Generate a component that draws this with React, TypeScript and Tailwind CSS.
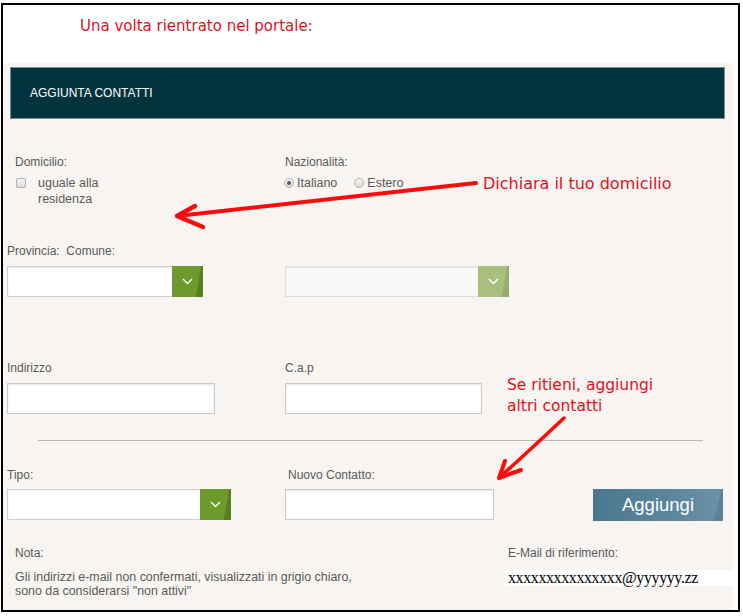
import React from "react";

const label = "text-[12px] leading-[14px] text-[#5a5a5a]";

function Chevron() {
  return (
    <svg width="11" height="7" viewBox="0 0 11 7" fill="none" className="relative">
      <path d="M1 1l4.5 4.5L10 1" stroke="white" strokeWidth="1.3" />
    </svg>
  );
}

function SelectBox({ className, disabled = false }: { className: string; disabled?: boolean }) {
  return (
    <div className={`flex h-[31px] ${className}`}>
      <div
        className={`flex-1 border-y border-l shadow-[inset_0_1px_2px_rgba(0,0,0,0.08)] ${
          disabled ? "border-[#dedede] bg-[#faf9f8]" : "border-[#cfcfcf] bg-white"
        }`}
      />
      <div
        className={`relative flex w-[31px] items-center justify-center ${
          disabled ? "bg-[#a9c07d]" : "bg-[#6c9a2d]"
        }`}
      >
        <div
          className={`absolute inset-0 [clip-path:polygon(94%_0,100%_0,100%_100%,77%_100%)] ${
            disabled ? "bg-[#97ad6c]" : "bg-[#587f22]"
          }`}
        />
        <Chevron />
      </div>
    </div>
  );
}

function TextInput({ className }: { className: string }) {
  return (
    <input
      readOnly
      className={`block h-[31px] border border-[#cacaca] bg-white shadow-[inset_0_1px_2px_rgba(0,0,0,0.1)] outline-none ${className}`}
    />
  );
}

function Radio({ checked = false }: { checked?: boolean }) {
  return (
    <span className="flex h-[10px] w-[10px] items-center justify-center rounded-full border border-[#b4b4b4] bg-linear-to-b from-[#f6f6f6] to-[#d9d9d9]">
      {checked && <span className="h-[4px] w-[4px] rounded-full bg-[#555]" />}
    </span>
  );
}

export default function App() {
  return (
    <div className="relative h-[616px] w-[743px] overflow-hidden bg-white font-['Liberation_Sans',Arial,sans-serif]">
      <div className="ml-[1px] mt-[3px] flex h-[609px] w-[739px] flex-col border-2 border-black bg-white">
        {/* intro */}
        <div className="h-[58px] pl-[77px] pt-[12px] font-['DejaVu_Sans',sans-serif] text-[15px] leading-[18px] text-[#e3101a]">
          Una volta rientrato nel portale:
        </div>

        <div className="w-[730px] flex-1 bg-[#f7f4f1] pt-[4px]">
          <div className="ml-[7px] flex h-[52px] w-[715px] items-center border border-[#6f8f97] bg-[#02333f] pl-[19px] text-[12px] text-white">
            AGGIUNTA CONTATTI
          </div>

          {/* domicilio / nazionalità */}
          <div className="mt-[36px] grid grid-cols-[282px_1fr]">
            <div className="pl-[12px]">
              <div className={label}>Domicilio:</div>
              <div className="mt-[6px] flex items-start">
                <span className="ml-[1px] mt-[3px] h-[10px] w-[10px] rounded-[2px] border border-[#b0b0b0] bg-linear-to-b from-[#f4f4f4] to-[#dcdcdc]" />
                <span className="ml-[12px] text-[12.5px] leading-[16px] text-[#5a5a5a]">
                  uguale alla
                  <br />
                  residenza
                </span>
              </div>
            </div>
            <div>
              <div className={label}>Nazionalità:</div>
              <div className="mt-[6px] flex items-center text-[12.5px] leading-[16px] text-[#5a5a5a]">
                <span className="-ml-[1px]">
                  <Radio checked />
                </span>
                <span className="ml-[3px]">Italiano</span>
                <span className="ml-[17px]">
                  <Radio />
                </span>
                <span className="ml-[3px]">Estero</span>
              </div>
            </div>
          </div>

          {/* provincia / comune */}
          <div className={`mt-[37px] whitespace-pre pl-[4px] ${label}`}>Provincia:  Comune:</div>
          <div className="mt-[8px] grid grid-cols-[278px_1fr] pl-[4px]">
            <SelectBox className="w-[196px]" />
            <SelectBox className="w-[224px]" disabled />
          </div>

          {/* indirizzo / cap */}
          <div className="mt-[64px] grid grid-cols-[278px_1fr] pl-[4px]">
            <div className={label}>Indirizzo</div>
            <div className={label}>C.a.p</div>
          </div>
          <div className="mt-[8px] grid grid-cols-[278px_1fr] pl-[4px]">
            <TextInput className="w-[208px]" />
            <TextInput className="w-[197px]" />
          </div>

          <div className="ml-[35px] mt-[26px] h-px w-[665px] bg-[#b8b8b8]" />

          {/* tipo / nuovo contatto */}
          <div className="mt-[27px] grid grid-cols-[278px_1fr] pl-[4px]">
            <div className={label}>Tipo:</div>
            <div className={`pl-[3px] ${label}`}>Nuovo Contatto:</div>
          </div>
          <div className="mt-[7px] grid grid-cols-[278px_308px_auto] pl-[4px]">
            <SelectBox className="w-[224px]" />
            <TextInput className="w-[209px]" />
            <button
              type="button"
              className="relative h-[32px] w-[130px] overflow-hidden bg-linear-to-r from-[#4a768f] to-[#6a92a7] text-[18.5px] leading-[32px] text-white"
            >
              <span className="absolute inset-0 bg-[#5a8398] [clip-path:polygon(99%_0,100%_0,100%_100%,93%_100%)]" />
              <span className="relative">Aggiungi</span>
            </button>
          </div>

          {/* nota / email */}
          <div className="mt-[25px] grid grid-cols-[490px_1fr] pl-[12px]">
            <div>
              <div className={label}>Nota:</div>
              <div className="mt-[10px] text-[12.4px] leading-[14px] text-[#5a5a5a]">
                Gli indirizzi e-mail non confermati, visualizzati in grigio chiaro,
                <br />
                sono da considerarsi &quot;non attivi&quot;
              </div>
            </div>
            <div>
              <div className={`pl-[3px] ${label}`}>E-Mail di riferimento:</div>
              <div className="mt-[10px] h-[16px] bg-white pl-[3px] font-['Liberation_Serif',serif] text-[16px] leading-[16px] tracking-[-0.4px] text-black">
                xxxxxxxxxxxxxxx@yyyyyy.zz
              </div>
            </div>
          </div>
        </div>
      </div>

      {/* annotations */}
      <div className="absolute left-[483px] top-[174px] font-['DejaVu_Sans',sans-serif] text-[16px] leading-[19px] text-[#e3101a]">
        Dichiara il tuo domicilio
      </div>
      <div className="absolute left-[507px] top-[375px] font-['DejaVu_Sans',sans-serif] text-[15.5px] leading-[21px] text-[#e3101a]">
        Se ritieni, aggiungi
        <br />
        altri contatti
      </div>
      <svg
        className="pointer-events-none absolute left-0 top-0"
        width="743"
        height="616"
        viewBox="0 0 743 616"
        fill="none"
      >
        <g stroke="#ff0a0a" strokeLinecap="round" strokeLinejoin="round">
          <path d="M476 183 L177 216" strokeWidth="4" />
          <path d="M195 206 L177 216 L203 227" strokeWidth="4.5" />
          <path d="M564 418 Q530 450 500 477" strokeWidth="3.5" />
          <path d="M505 461 L499 478 L521 470" strokeWidth="4" />
        </g>
      </svg>
    </div>
  );
}
